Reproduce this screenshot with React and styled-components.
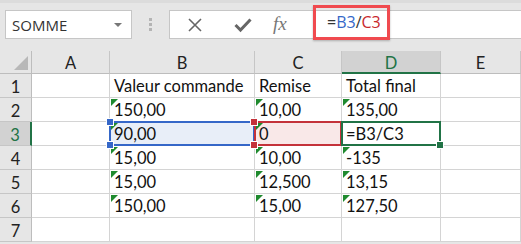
import React from 'react'
import styled, { createGlobalStyle } from 'styled-components'

const GlobalStyle = createGlobalStyle`
  html, body {
    margin: 0;
    padding: 0;
    background: #e6e6e6;
  }
  body {
    font-family: "Open Sans", "Liberation Sans", sans-serif;
    width: 521px;
    height: 244px;
    overflow: hidden;
  }
`

const cols = ['A', 'B', 'C', 'D', 'E']

const rows = [
    ['', 'Valeur commande', 'Remise', 'Total final', ''],
    ['', '150,00', '10,00', '135,00', ''],
    ['', '90,00', '0', '=B3/C3', ''],
    ['', '15,00', '10,00', '-135', ''],
    ['', '15,00', '12,500', '13,15', ''],
    ['', '150,00', '15,00', '127,50', ''],
    ['', '', '', '', ''],
]

// which cells show the little green "number stored as text" flag
const flagged = (r, c) => r >= 1 && r <= 5 && c >= 1 && c <= 3 && !(r === 2 && c === 3)

const selection = {
    '2-1': 'ref1',
    '2-2': 'ref2',
    '2-3': 'active',
}

class App extends React.PureComponent {
    render() {
        return (
            <Page>
                <GlobalStyle />
                <TopStrip />
                <FormulaBar>
                    <NameBox>
                        <span>SOMME</span>
                        <DropArrow />
                    </NameBox>
                    <Grip>
                        <i /><i /><i />
                    </Grip>
                    <FormulaBox>
                        <IconButton>
                            <svg width="16" height="16" viewBox="0 0 16 16">
                                <path d="M2 2 L14 14 M14 2 L2 14" stroke="#666" strokeWidth="1.6" fill="none" />
                            </svg>
                        </IconButton>
                        <IconButton>
                            <svg width="18" height="16" viewBox="0 0 18 16">
                                <path d="M1.5 8 L6.5 13 L16.5 2.5" stroke="#666" strokeWidth="3" fill="none" />
                            </svg>
                        </IconButton>
                        <FxLabel>fx</FxLabel>
                        <FormulaText>
                            =<RefSpan color="#3567c8">B3</RefSpan>/<RefSpan color="#c8282c">C3</RefSpan>
                        </FormulaText>
                    </FormulaBox>
                </FormulaBar>
                <Sheet>
                    <Corner />
                    {cols.map(c => (
                        <ColHeader key={c} active={c === 'D'}>{c}</ColHeader>
                    ))}
                    {rows.map((row, r) => (
                        <React.Fragment key={r}>
                            <RowHeader active={r === 2}>{r + 1}</RowHeader>
                            {row.map((val, c) => {
                                const sel = selection[`${r}-${c}`]
                                return (
                                    <Cell key={c} sel={sel}>
                                        {flagged(r, c) && <Flag />}
                                        {val}
                                        {sel === 'ref1' && (
                                            <>
                                                <Handle color="#3567c8" style={{ left: -4, top: -4 }} />
                                                <Handle color="#3567c8" style={{ left: -4, bottom: -4 }} />
                                                <Handle color="#c4323a" style={{ right: -4, top: -4 }} />
                                                <Handle color="#c4323a" style={{ right: -4, bottom: -4 }} />
                                            </>
                                        )}
                                        {sel === 'active' && <Handle color="#217346" style={{ right: -4, bottom: -4 }} />}
                                    </Cell>
                                )
                            })}
                        </React.Fragment>
                    ))}
                </Sheet>
            </Page>
        )
    }
}

const Page = styled.div`
    width: 521px;
    height: 244px;
    background: #e6e6e6;
    display: flex;
    flex-direction: column;
`

const TopStrip = styled.div`
    height: 3px;
    background: #dcdcdc;
`

const FormulaBar = styled.div`
    display: flex;
    align-items: center;
    padding: 7px 0 0 5px;
    height: 29px;
`

const NameBox = styled.div`
    width: 127px;
    height: 29px;
    box-sizing: border-box;
    background: #fff;
    border: 1px solid #c6c6c6;
    display: flex;
    align-items: center;
    justify-content: space-between;
    padding: 0 9px 0 6px;
    font-size: 15px;
    color: #333;
`

const DropArrow = styled.span`
    width: 0;
    height: 0;
    border-left: 4px solid transparent;
    border-right: 4px solid transparent;
    border-top: 4px solid #777;
`

const Grip = styled.div`
    width: 37px;
    display: flex;
    flex-direction: column;
    align-items: center;
    gap: 2px;
    i {
        width: 3px;
        height: 3px;
        background: #b4b4b4;
    }
`

const FormulaBox = styled.div`
    flex: 1;
    height: 29px;
    box-sizing: border-box;
    background: #fff;
    border: 1px solid #c6c6c6;
    border-right: none;
    display: flex;
    align-items: center;
    padding-left: 15px;
`

const IconButton = styled.div`
    width: 45px;
    display: flex;
    align-items: center;
    justify-content: flex-start;
    padding-left: 2px;
`

const FxLabel = styled.span`
    font-family: "Liberation Serif", serif;
    font-style: italic;
    font-size: 19px;
    color: #777;
    width: 40px;
    margin-left: -6px;
    margin-top: -2px;
`

const FormulaText = styled.div`
    margin-top: -5px;
    height: 35px;
    box-sizing: border-box;
    border: 3px solid #f04a4f;
    display: flex;
    align-items: center;
    padding: 0 6px 0 11px;
    font-size: 16px;
    color: #333;
    box-shadow: 0 1px 2px rgba(0, 0, 0, 0.25);
`

const RefSpan = styled.span`
    color: ${p => p.color};
`

const Sheet = styled.div`
    margin-top: 12px;
    display: grid;
    grid-template-columns: 32px 78px 145px 87px 99px 80px;
    grid-template-rows: 23px repeat(7, 24px);
    background: #fff;
    font-family: "Lato", "Open Sans", sans-serif;
    font-size: 16.5px;
    color: #111;
`

const Corner = styled.div`
    background: #e6e6e6;
    border-right: 1px solid #bdbdbd;
    border-bottom: 1px solid #bdbdbd;
    position: relative;
    &::after {
        content: '';
        position: absolute;
        right: 3px;
        bottom: 3px;
        border-left: 14px solid transparent;
        border-bottom: 14px solid #b8b8b8;
    }
`

const ColHeader = styled.div`
    background: ${p => (p.active ? '#d2d2d2' : '#e6e6e6')};
    color: ${p => (p.active ? '#217346' : '#222')};
    border-right: 1px solid #c6c6c6;
    border-bottom: ${p => (p.active ? '2px solid #217346' : '1px solid #bdbdbd')};
    display: flex;
    align-items: center;
    justify-content: center;
    box-sizing: border-box;
    padding-top: 2px;
`

const RowHeader = styled.div`
    background: ${p => (p.active ? '#d2d2d2' : '#e6e6e6')};
    color: ${p => (p.active ? '#217346' : '#222')};
    border-right: ${p => (p.active ? '2px solid #217346' : '1px solid #bdbdbd')};
    border-bottom: 1px solid #c6c6c6;
    box-sizing: border-box;
    display: flex;
    align-items: center;
    justify-content: center;
    padding-top: 2px;
`

const selStyles = {
    ref1: { border: '#3567c8', bg: '#e8eef8' },
    ref2: { border: '#c4323a', bg: '#f9e8e8' },
    active: { border: '#217346', bg: '#fff' },
}

const Cell = styled.div`
    position: relative;
    box-sizing: border-box;
    border-right: 1px solid #d4d4d4;
    border-bottom: 1px solid #d4d4d4;
    background: ${p => (p.sel ? selStyles[p.sel].bg : '#fff')};
    display: flex;
    align-items: flex-end;
    padding: 0 0 1px 4px;
    white-space: nowrap;
    &::before {
        content: '';
        display: ${p => (p.sel ? 'block' : 'none')};
        position: absolute;
        left: -1px;
        top: -1px;
        right: -1px;
        bottom: -1px;
        border: 2px solid ${p => (p.sel ? selStyles[p.sel].border : 'transparent')};
        pointer-events: none;
    }
`

const Flag = styled.span`
    position: absolute;
    left: 1px;
    top: 1px;
    width: 0;
    height: 0;
    border-top: 7px solid #1f8a2e;
    border-right: 7px solid transparent;
`

const Handle = styled.span`
    position: absolute;
    width: 6px;
    height: 6px;
    background: ${p => p.color};
    border: 1px solid #fff;
    z-index: 2;
`

export default App
